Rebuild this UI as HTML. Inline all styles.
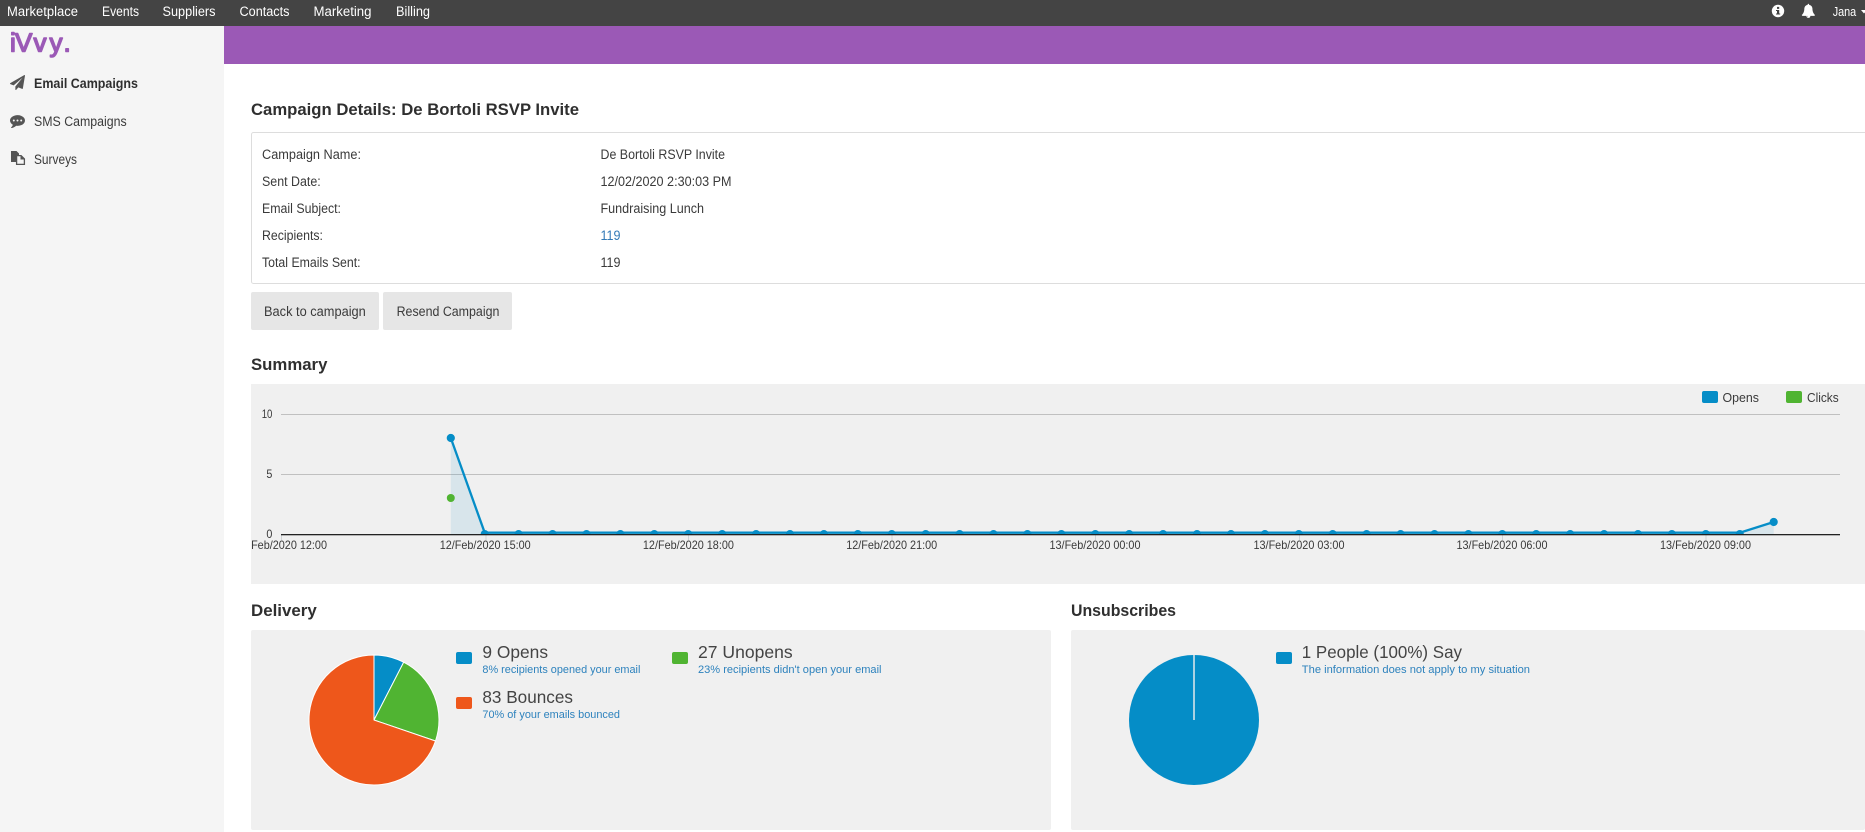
<!DOCTYPE html>
<html lang="en">
<head>
<meta charset="utf-8">
<title>Campaign Details: De Bortoli RSVP Invite</title>
<style>
html,body{margin:0;padding:0;width:1865px;height:832px;overflow:hidden;background:#fff}
svg{display:block}
text{font-family:"Liberation Sans",Arial,sans-serif;font-size:13.5px;fill:#3a3a3a}
.nav text{fill:#fff}
.h{font-size:17px;font-weight:bold;fill:#2f2f2f}
.ax{font-size:12px;fill:#3a3a3a}
.big{font-size:17.5px;fill:#444}
.sub{font-size:11px;fill:#2d82bd}
</style>
</head>
<body>
<svg xmlns="http://www.w3.org/2000/svg" width="1865" height="832" viewBox="0 0 1865 832">
<defs>
<clipPath id="pc"><rect x="251" y="384" width="1614" height="200"/></clipPath>
<clipPath id="dc"><rect x="251" y="384" width="1614" height="150"/></clipPath>
</defs>

<!-- backgrounds -->
<rect x="0" y="26" width="224" height="806" fill="#f5f5f5"/>
<rect x="224" y="26" width="1641" height="38" fill="#9b59b6"/>
<rect x="0" y="0" width="1865" height="26" fill="#444"/>

<!-- top nav -->
<g class="nav">
<text x="7" y="16" textLength="71" lengthAdjust="spacingAndGlyphs">Marketplace</text>
<text x="102" y="16" textLength="37" lengthAdjust="spacingAndGlyphs">Events</text>
<text x="162.5" y="16" textLength="53" lengthAdjust="spacingAndGlyphs">Suppliers</text>
<text x="239.5" y="16" textLength="50" lengthAdjust="spacingAndGlyphs">Contacts</text>
<text x="313.5" y="16" textLength="58" lengthAdjust="spacingAndGlyphs">Marketing</text>
<text x="396" y="16" textLength="34" lengthAdjust="spacingAndGlyphs">Billing</text>
<text x="1832.7" y="16" style="font-size:12.5px" textLength="23.5" lengthAdjust="spacingAndGlyphs">Jana</text>
</g>
<!-- info icon -->
<circle cx="1778" cy="11" r="6.2" fill="#fff"/>
<rect x="1777" y="10" width="2.2" height="4.3" fill="#444"/>
<rect x="1776" y="10" width="2" height="1" fill="#444"/>
<rect x="1776" y="13.5" width="4.2" height="1" fill="#444"/>
<rect x="1777" y="6.9" width="2.2" height="2" fill="#444"/>
<!-- bell icon -->
<path transform="translate(1801.3,3.8) scale(.0079)" fill="#fff" d="M912 1696q0-16-16-16-59 0-101.500-42.500t-42.500-101.500q0-16-16-16t-16 16q0 73 51.500 124.500t124.500 51.500q16 0 16-16zm816-288q0 52-38 90t-90 38h-448q0 106-75 181t-181 75-181-75-75-181h-448q-52 0-90-38t-38-90q50-42 91-88t85-119.500 74.500-158.500 50-206 19.500-260q0-152 117-282.500t307-158.500q-8-19-8-39 0-40 28-68t68-28 68 28 28 68q0 20-8 39 190 28 307 158.500t117 282.500q0 139 19.500 260t50 206 74.500 158.500 85 119.500 91 88z"/>
<!-- caret -->
<path d="M1861 10h6l-3 3.500z" fill="#fff"/>

<!-- logo -->
<text x="10 15 33.500 49.500 63.500" y="51.500" style="font-size:26px;fill:#9b59b6;stroke:#9b59b6;stroke-width:1.500;stroke-linejoin:round">iVvy.</text>

<!-- sidebar -->
<path transform="translate(10,75) scale(.00837)" fill="#555" d="M1764 11q33 24 27 64l-256 1536q-5 29-32 45-14 8-31 8-11 0-24-5l-453-185-242 295q-18 23-49 23-13 0-22-4-19-7-30.500-23.500t-11.500-36.500v-349l864-1059-1069 925-395-162q-37-14-40-55-2-40 32-59l1664-960q15-9 32-9 20 0 36 11z"/>
<text x="34" y="88" textLength="104" lengthAdjust="spacingAndGlyphs" style="font-weight:bold;font-size:13.5px;fill:#2f2f2f">Email Campaigns</text>
<path transform="translate(10,113) scale(.00837)" fill="#555" d="M1792 896q0 174-120 321.500t-326 233-450 85.500q-70 0-145-8-198 175-460 242-49 14-114 22-17 2-30.500-9t-17.500-29v-1q-3-4-.5-12t2-10 4.500-9.500l6-9 7-8.500 8-9q7-8 31-34.500t34.500-38 31-39.500 32.500-51 27-59 26-76q-157-89-247.500-220t-90.500-281q0-130 71-248.500t191-204.500 286-136.500 348-50.500q244 0 450 85.500t326 233 120 321.500z"/>
<circle cx="13.800" cy="120.500" r="1" fill="#f5f5f5"/><circle cx="17.500" cy="120.500" r="1" fill="#f5f5f5"/><circle cx="21.200" cy="120.500" r="1" fill="#f5f5f5"/>
<text x="34" y="126" textLength="92.700" lengthAdjust="spacingAndGlyphs">SMS Campaigns</text>
<path d="M11 151h5.500l2.500 2.500v1.500h-3v7h-5z" fill="#555"/>
<path d="M16.600 155.600h4.500l3.300 3.300v5.500h-7.800z" fill="#f5f5f5" stroke="#555" stroke-width="1.300"/>
<path d="M20.500 155.500v4h4z" fill="#555"/>
<text x="34" y="164" textLength="43" lengthAdjust="spacingAndGlyphs">Surveys</text>

<!-- campaign details -->
<text class="h" x="251" y="115" textLength="328" lengthAdjust="spacingAndGlyphs">Campaign Details: De Bortoli RSVP Invite</text>
<rect x="251.500" y="132.500" width="1640" height="151" rx="2" fill="#fff" stroke="#ddd"/>
<text x="262" y="159" textLength="99" lengthAdjust="spacingAndGlyphs">Campaign Name:</text>
<text x="262" y="186" textLength="58.700" lengthAdjust="spacingAndGlyphs">Sent Date:</text>
<text x="262" y="213" textLength="79" lengthAdjust="spacingAndGlyphs">Email Subject:</text>
<text x="262" y="240" textLength="61" lengthAdjust="spacingAndGlyphs">Recipients:</text>
<text x="262" y="267" textLength="98.600" lengthAdjust="spacingAndGlyphs">Total Emails Sent:</text>
<text x="600.500" y="159" textLength="124.500" lengthAdjust="spacingAndGlyphs">De Bortoli RSVP Invite</text>
<text x="600.500" y="186" textLength="131" lengthAdjust="spacingAndGlyphs">12/02/2020 2:30:03 PM</text>
<text x="600.500" y="213" textLength="103.500" lengthAdjust="spacingAndGlyphs">Fundraising Lunch</text>
<text x="600.500" y="240" textLength="20" lengthAdjust="spacingAndGlyphs" style="fill:#337ab7">119</text>
<text x="600.500" y="267" textLength="20" lengthAdjust="spacingAndGlyphs">119</text>

<!-- buttons -->
<rect x="251" y="292" width="128" height="38" rx="2" fill="#e6e6e6"/>
<rect x="383" y="292" width="129" height="38" rx="2" fill="#e6e6e6"/>
<text x="264" y="316" textLength="101.800" lengthAdjust="spacingAndGlyphs">Back to campaign</text>
<text x="396.600" y="316" textLength="102.800" lengthAdjust="spacingAndGlyphs">Resend Campaign</text>

<!-- summary -->
<text class="h" x="251" y="370" textLength="76.400" lengthAdjust="spacingAndGlyphs">Summary</text>
<rect x="251" y="384" width="1614" height="200" fill="#f0f0f0"/>
<path d="M281 414.500H1840M281 474.500H1840" fill="none" stroke="#c0c0c0" stroke-width="1"/>
<path d="M281.500 535v5M486 535v5M688.500 535v5M892 535v5M1095.500 535v5M1299.500 535v5M1502.500 535v5M1706 535v5" fill="none" stroke="#cfd3d6"/>
<text class="ax" x="261.700" y="418" textLength="10.700" lengthAdjust="spacingAndGlyphs">10</text>
<text class="ax" x="266.400" y="478" textLength="6" lengthAdjust="spacingAndGlyphs">5</text>
<text class="ax" x="266.400" y="538" textLength="6" lengthAdjust="spacingAndGlyphs">0</text>
<g clip-path="url(#pc)">
<text class="ax" x="236" y="549" textLength="91" lengthAdjust="spacingAndGlyphs">12/Feb/2020 12:00</text>
<text class="ax" x="439.700" y="549" textLength="91" lengthAdjust="spacingAndGlyphs">12/Feb/2020 15:00</text>
<text class="ax" x="642.900" y="549" textLength="91" lengthAdjust="spacingAndGlyphs">12/Feb/2020 18:00</text>
<text class="ax" x="846.200" y="549" textLength="91" lengthAdjust="spacingAndGlyphs">12/Feb/2020 21:00</text>
<text class="ax" x="1049.500" y="549" textLength="91" lengthAdjust="spacingAndGlyphs">13/Feb/2020 00:00</text>
<text class="ax" x="1253.500" y="549" textLength="91" lengthAdjust="spacingAndGlyphs">13/Feb/2020 03:00</text>
<text class="ax" x="1456.500" y="549" textLength="91" lengthAdjust="spacingAndGlyphs">13/Feb/2020 06:00</text>
<text class="ax" x="1660" y="549" textLength="91" lengthAdjust="spacingAndGlyphs">13/Feb/2020 09:00</text>
</g>
<path d="M450.800 438L484.700 534H450.800zM1739.800 534L1773.700 522V534z" fill="#058dc7" fill-opacity=".1"/>
<polyline points="450.800,438 484.700,532.700 1739.800,532.700 1773.700,522" fill="none" stroke="#058dc7" stroke-width="2.300"/>
<circle cx="450.800" cy="498" r="4" fill="#50b432"/>
<g fill="#058dc7" clip-path="url(#dc)">
<circle cx="450.800" cy="438" r="4.100"/>
<circle cx="484.700" cy="534" r="4"/><circle cx="518.600" cy="534" r="4"/><circle cx="552.600" cy="534" r="4"/><circle cx="586.500" cy="534" r="4"/><circle cx="620.400" cy="534" r="4"/><circle cx="654.300" cy="534" r="4"/><circle cx="688.200" cy="534" r="4"/><circle cx="722.200" cy="534" r="4"/><circle cx="756.100" cy="534" r="4"/><circle cx="790" cy="534" r="4"/><circle cx="823.900" cy="534" r="4"/><circle cx="857.800" cy="534" r="4"/><circle cx="891.800" cy="534" r="4"/><circle cx="925.700" cy="534" r="4"/><circle cx="959.600" cy="534" r="4"/><circle cx="993.500" cy="534" r="4"/><circle cx="1027.400" cy="534" r="4"/><circle cx="1061.400" cy="534" r="4"/><circle cx="1095.300" cy="534" r="4"/><circle cx="1129.200" cy="534" r="4"/><circle cx="1163.100" cy="534" r="4"/><circle cx="1197" cy="534" r="4"/><circle cx="1231" cy="534" r="4"/><circle cx="1264.900" cy="534" r="4"/><circle cx="1298.800" cy="534" r="4"/><circle cx="1332.700" cy="534" r="4"/><circle cx="1366.600" cy="534" r="4"/><circle cx="1400.600" cy="534" r="4"/><circle cx="1434.500" cy="534" r="4"/><circle cx="1468.400" cy="534" r="4"/><circle cx="1502.300" cy="534" r="4"/><circle cx="1536.200" cy="534" r="4"/><circle cx="1570.200" cy="534" r="4"/><circle cx="1604.100" cy="534" r="4"/><circle cx="1638" cy="534" r="4"/><circle cx="1671.900" cy="534" r="4"/><circle cx="1705.800" cy="534" r="4"/><circle cx="1739.800" cy="534" r="4"/>
<circle cx="1773.700" cy="522" r="4.100"/>
</g>
<rect x="281" y="534" width="1559" height="1.300" fill="#222"/>
<!-- summary legend -->
<rect x="1702" y="391" width="16" height="12" rx="2" fill="#058dc7"/>
<text x="1722.500" y="402" style="font-size:13px" textLength="36.500" lengthAdjust="spacingAndGlyphs">Opens</text>
<rect x="1786" y="391" width="16" height="12" rx="2" fill="#50b432"/>
<text x="1807" y="402" style="font-size:13px" textLength="31.700" lengthAdjust="spacingAndGlyphs">Clicks</text>

<!-- delivery -->
<text class="h" x="251" y="616" textLength="65.800" lengthAdjust="spacingAndGlyphs">Delivery</text>
<rect x="251" y="630" width="800" height="200" rx="2" fill="#f0f0f0"/>
<g stroke="#fff" stroke-width="1" stroke-linejoin="round">
<path d="M374 720L374 655A65 65 0 0 1 403.700 662.200Z" fill="#058dc7"/>
<path d="M374 720L403.700 662.200A65 65 0 0 1 435.500 741Z" fill="#50b432"/>
<path d="M374 720L435.500 741A65 65 0 1 1 374 655Z" fill="#ee571b"/>
</g>
<rect x="456" y="652" width="16" height="12" rx="2" fill="#058dc7"/>
<text class="big" x="482.400" y="658" textLength="65.600" lengthAdjust="spacingAndGlyphs">9 Opens</text>
<text class="sub" x="482.400" y="673" textLength="158" lengthAdjust="spacingAndGlyphs">8% recipients opened your email</text>
<rect x="672" y="652" width="16" height="12" rx="2" fill="#50b432"/>
<text class="big" x="698" y="658" textLength="94.700" lengthAdjust="spacingAndGlyphs">27 Unopens</text>
<text class="sub" x="698" y="673" textLength="183.500" lengthAdjust="spacingAndGlyphs">23% recipients didn't open your email</text>
<rect x="456" y="697" width="16" height="12" rx="2" fill="#ee571b"/>
<text class="big" x="482.400" y="703" textLength="90.600" lengthAdjust="spacingAndGlyphs">83 Bounces</text>
<text class="sub" x="482.400" y="718" textLength="137.600" lengthAdjust="spacingAndGlyphs">70% of your emails bounced</text>

<!-- unsubscribes -->
<text class="h" x="1071" y="616" textLength="105" lengthAdjust="spacingAndGlyphs">Unsubscribes</text>
<rect x="1071" y="630" width="794" height="200" rx="2" fill="#f0f0f0"/>
<circle cx="1194" cy="720" r="65" fill="#058dc7"/>
<path d="M1194 655V720" stroke="#e4e8ea" stroke-width="1.500" fill="none"/>
<rect x="1276" y="652" width="16" height="12" rx="2" fill="#058dc7"/>
<text class="big" x="1301.800" y="658" textLength="160.200" lengthAdjust="spacingAndGlyphs">1 People (100%) Say</text>
<text class="sub" x="1301.800" y="673" textLength="228.200" lengthAdjust="spacingAndGlyphs">The information does not apply to my situation</text>
</svg>
</body>
</html>
